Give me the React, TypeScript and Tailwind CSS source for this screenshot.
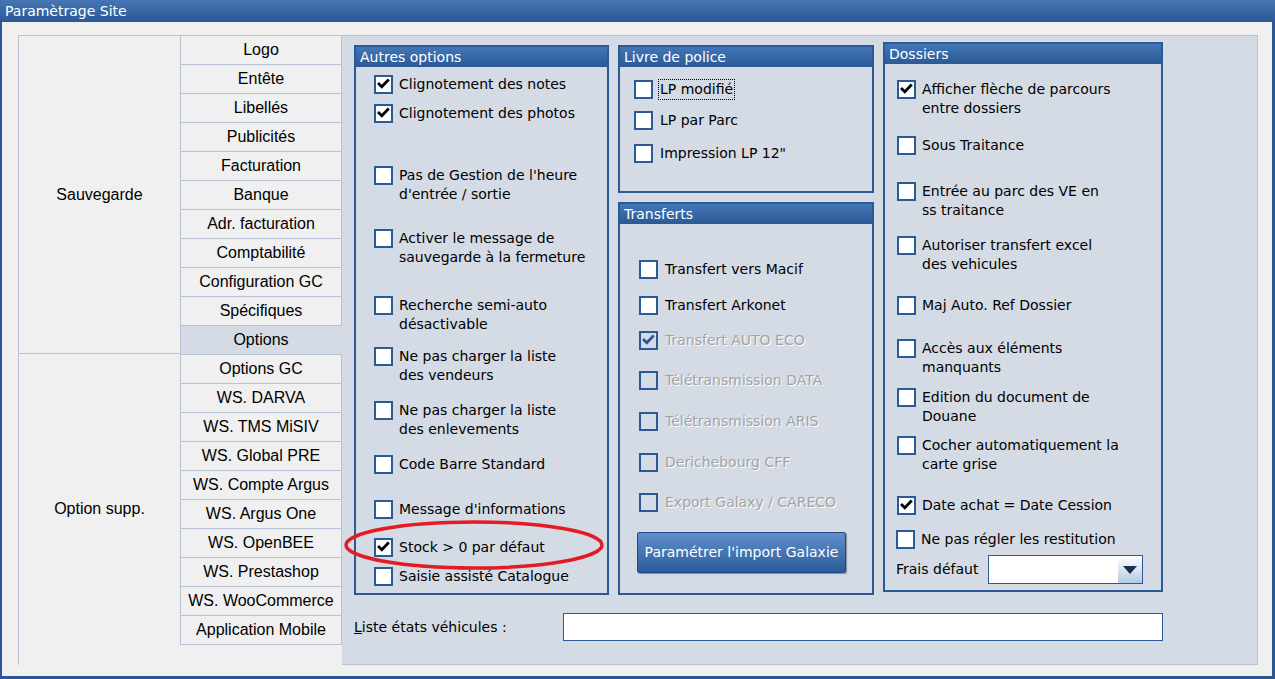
import React from 'react';

const menuItems = [
  'Logo',
  'Entête',
  'Libellés',
  'Publicités',
  'Facturation',
  'Banque',
  'Adr. facturation',
  'Comptabilité',
  'Configuration GC',
  'Spécifiques',
  'Options',
  'Options GC',
  'WS. DARVA',
  'WS. TMS MiSIV',
  'WS. Global PRE',
  'WS. Compte Argus',
  'WS. Argus One',
  'WS. OpenBEE',
  'WS. Prestashop',
  'WS. WooCommerce',
  'Application Mobile',
];

const Check = ({ color = '#000' }: { color?: string }) => (
  <svg width="15" height="15" viewBox="0 0 15 15">
    <path d="M3 7 L5.8 9.8 L11.8 3.5" fill="none" stroke={color} strokeWidth="2.8" strokeLinecap="square" />
  </svg>
);

interface BoxProps {
  label: React.ReactNode;
  checked?: boolean;
  disabled?: boolean;
  focus?: boolean;
  gap: string;
  mt: string;
}

const Box: React.FC<BoxProps> = ({ label, checked, disabled, focus, gap, mt }) => (
  <div className={`flex items-start ${gap} ${mt}`}>
    <div
      className={`w-[19px] h-[19px] shrink-0 border-2 border-[#2d5a94] flex items-center justify-center ${
        disabled ? 'bg-[#d4dbe5]' : 'bg-white'
      }`}
    >
      {checked && <Check color={disabled ? '#2d5a94' : '#000'} />}
    </div>
    <div
      className={`text-[14px] leading-[19px] whitespace-nowrap ${
        disabled ? 'text-[#a3a3a3] [text-shadow:1px_1px_0_#ffffff]' : 'text-black'
      } ${focus ? 'outline outline-1 outline-dotted outline-black -ml-[1px] px-[1px]' : ''}`}
    >
      {label}
    </div>
  </div>
);

const Group = ({
  title,
  className,
  bodyClass,
  children,
}: {
  title: string;
  className: string;
  bodyClass: string;
  children: React.ReactNode;
}) => (
  <div className={`border-2 border-[#2d5a94] flex flex-col ${className}`}>
    <div className="h-[20px] shrink-0 bg-gradient-to-b from-[#4277b8] to-[#2b5994] text-white text-[14px] leading-[20px] pl-[4px]">
      {title}
    </div>
    <div className={`flex flex-col items-start ${bodyClass}`}>{children}</div>
  </div>
);

export default function App() {
  return (
    <div className="relative w-[1275px] h-[679px] flex flex-col bg-[#f0f0f0] font-['DejaVu_Sans',sans-serif]">
      <div className="h-[22px] shrink-0 bg-gradient-to-b from-[#4676b3] to-[#2b5997] text-white text-[14px] leading-[22px] pl-[5px]">
        Paramètrage Site
      </div>

      <div className="flex-1 flex border-l-2 border-r-[3px] border-b-[3px] border-[#2b5797] pt-[13px] pl-[16px]">
        {/* colonne des sections */}
        <div className="w-[162px] h-[630px] border-l border-t border-[#b7c3d5] flex flex-col font-['Liberation_Sans',sans-serif] text-[16px] text-black">
          <div className="h-[318px] border-b border-[#b7c3d5] flex items-center justify-center">Sauvegarde</div>
          <div className="flex-1 flex items-center justify-center pb-[2px]">Option supp.</div>
        </div>

        {/* menu */}
        <div className="w-[162px] flex flex-col border-t border-[#b7c3d5] font-['Liberation_Sans',sans-serif] text-[16px] text-black self-start">
          {menuItems.map((m) => (
            <div
              key={m}
              className={`h-[29px] border-b border-x border-[#b7c3d5] flex items-center justify-center whitespace-nowrap ${
                m === 'Options' ? 'bg-[#d4dbe5] border-r-[#d4dbe5]' : ''
              }`}
            >
              {m}
            </div>
          ))}
        </div>

        {/* contenu */}
        <div className="w-[916px] h-[630px] bg-[#d4dbe5] border border-l-0 border-[#b9c2cf] pl-[12px] pt-[9px] flex flex-col">
          <div className="flex items-start">
            <Group title="Autres options" className="w-[255px] h-[550px]" bodyClass="pl-[18px]">
              <Box mt="mt-[8px]" gap="gap-[6px]" checked label="Clignotement des notes" />
              <Box mt="mt-[10px]" gap="gap-[6px]" checked label="Clignotement des photos" />
              <Box mt="mt-[43px]" gap="gap-[6px]" label={<>Pas de Gestion de l'heure<br />d'entrée / sortie</>} />
              <Box mt="mt-[25px]" gap="gap-[6px]" label={<>Activer le message de<br />sauvegarde à la fermeture</>} />
              <Box mt="mt-[29px]" gap="gap-[6px]" label={<>Recherche semi-auto<br />désactivable</>} />
              <Box mt="mt-[13px]" gap="gap-[6px]" label={<>Ne pas charger la liste<br />des vendeurs</>} />
              <Box mt="mt-[16px]" gap="gap-[6px]" label={<>Ne pas charger la liste<br />des enlevements</>} />
              <Box mt="mt-[16px]" gap="gap-[6px]" label="Code Barre Standard" />
              <Box mt="mt-[26px]" gap="gap-[6px]" label="Message d'informations" />
              <Box mt="mt-[19px]" gap="gap-[6px]" checked label="Stock > 0 par défaut" />
              <Box mt="mt-[10px]" gap="gap-[6px]" label="Saisie assisté Catalogue" />
            </Group>

            <div className="ml-[9px] w-[256px] flex flex-col gap-[9px]">
              <Group title="Livre de police" className="h-[148px]" bodyClass="pl-[14px]">
                <Box mt="mt-[13px]" gap="gap-[7px]" focus label="LP modifié" />
                <Box mt="mt-[12px]" gap="gap-[7px]" label="LP par Parc" />
                <Box mt="mt-[14px]" gap="gap-[7px]" label={'Impression LP 12"'} />
              </Group>
              <Group title="Transferts" className="h-[393px]" bodyClass="pl-[19px]">
                <Box mt="mt-[36px]" gap="gap-[7px]" label="Transfert vers Macif" />
                <Box mt="mt-[17px]" gap="gap-[7px]" label="Transfert Arkonet" />
                <Box mt="mt-[16px]" gap="gap-[7px]" checked disabled label="Transfert AUTO ECO" />
                <Box mt="mt-[21px]" gap="gap-[7px]" disabled label="Télétransmission DATA" />
                <Box mt="mt-[22px]" gap="gap-[7px]" disabled label="Télétransmission ARIS" />
                <Box mt="mt-[22px]" gap="gap-[7px]" disabled label="Derichebourg CFF" />
                <Box mt="mt-[21px]" gap="gap-[7px]" disabled label="Export Galaxy / CARECO" />
                <button className="mt-[20px] -ml-[2px] w-[209px] h-[41px] rounded-[2px] border border-[#1f4a86] bg-gradient-to-b from-[#5e8fcc] to-[#2d5c9b] text-white text-[14px] shadow-[1px_1px_1px_rgba(0,0,0,0.35)] font-['DejaVu_Sans',sans-serif]">
                  Paramétrer l'import Galaxie
                </button>
              </Group>
            </div>

            <Group title="Dossiers" className="ml-[9px] -mt-[3px] w-[280px] h-[550px]" bodyClass="pl-[12px]">
              <Box mt="mt-[16px]" gap="gap-[6px]" checked label={<>Afficher flèche de parcours<br />entre dossiers</>} />
              <Box mt="mt-[18px]" gap="gap-[6px]" label="Sous Traitance" />
              <Box mt="mt-[27px]" gap="gap-[6px]" label={<>Entrée au parc des VE en<br />ss traitance</>} />
              <Box mt="mt-[16px]" gap="gap-[6px]" label={<>Autoriser transfert excel<br />des vehicules</>} />
              <Box mt="mt-[22px]" gap="gap-[6px]" label="Maj Auto. Ref Dossier" />
              <Box mt="mt-[24px]" gap="gap-[6px]" label={<>Accès aux éléments<br />manquants</>} />
              <Box mt="mt-[11px]" gap="gap-[6px]" label={<>Edition du document de<br />Douane</>} />
              <Box mt="mt-[10px]" gap="gap-[6px]" label={<>Cocher automatiquement la<br />carte grise</>} />
              <Box mt="mt-[22px]" gap="gap-[6px]" checked label="Date achat = Date Cession" />
              <div className="-ml-[1px]">
                <Box mt="mt-[15px]" gap="gap-[6px]" label="Ne pas régler les restitution" />
              </div>
              <div className="mt-[6px] -ml-[1px] flex items-center">
                <span className="w-[92px] text-[14px] text-black">Frais défaut</span>
                <div className="w-[155px] h-[29px] border border-[#2d5a94] bg-white flex justify-end">
                  <div className="w-[24px] h-full bg-gradient-to-b from-[#ffffff] to-[#b3cae6] flex items-center justify-center">
                    <svg width="14" height="8" viewBox="0 0 14 8">
                      <path d="M0 0 H14 L7 8 Z" fill="#17304f" />
                    </svg>
                  </div>
                </div>
              </div>
            </Group>
          </div>

          <div className="mt-[18px] flex items-center">
            <span className="w-[209px] text-[14px] text-black">
              <span className="underline">L</span>iste états véhicules :
            </span>
            <div className="w-[600px] h-[28px] border border-[#2d5a94] bg-white" />
          </div>
        </div>
      </div>

      {/* annotation */}
      <svg className="absolute left-[343px] top-[519px]" width="262" height="52" viewBox="0 0 262 52">
        <ellipse cx="131" cy="26" rx="128" ry="23" fill="none" stroke="#e31b23" strokeWidth="3.5" />
      </svg>
    </div>
  );
}
